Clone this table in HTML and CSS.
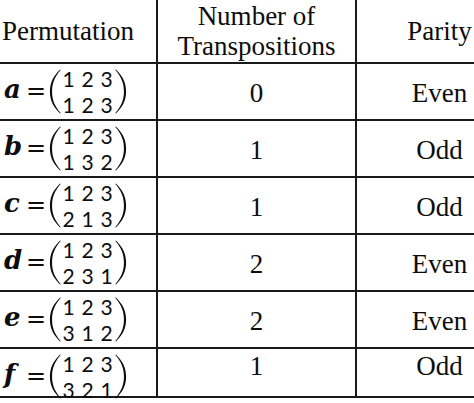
FILE: index.html
```html
<!DOCTYPE html>
<html lang="en">
<head>
<meta charset="utf-8">
<title>Permutation parity</title>
<link rel="stylesheet" href="styles.css">
</head>
<body>
<div class="frame">
  <div class="grid" role="table">
    <div class="cell head c1" role="columnheader">Permutation</div>
    <div class="cell head" role="columnheader">Number of<br>Transpositions</div>
    <div class="cell head" role="columnheader">Parity</div>

    <div class="cell math"><div class="expr"><span class="var">a</span><span class="eq">=</span><svg class="paren pl" viewBox="0 0 12 46"><path d="M11.2 0.5 C3.5 8 0.8 15 0.8 23 C0.8 31 3.5 38 11.2 45.5 L11.8 45 C5.5 38 3 31 3 23 C3 15 5.5 8 11.8 1 Z"/></svg><span class="mat"><span>1</span><span>2</span><span>3</span><span>1</span><span>2</span><span>3</span></span><svg class="paren pr" viewBox="0 0 12 46"><path d="M0.8 0.5 C8.5 8 11.2 15 11.2 23 C11.2 31 8.5 38 0.8 45.5 L0.2 45 C6.5 38 9 31 9 23 C9 15 6.5 8 0.2 1 Z"/></svg></div></div>
    <div class="cell num">0</div>
    <div class="cell num">Even</div>

    <div class="cell math"><div class="expr"><span class="var">b</span><span class="eq">=</span><svg class="paren pl" viewBox="0 0 12 46"><path d="M11.2 0.5 C3.5 8 0.8 15 0.8 23 C0.8 31 3.5 38 11.2 45.5 L11.8 45 C5.5 38 3 31 3 23 C3 15 5.5 8 11.8 1 Z"/></svg><span class="mat"><span>1</span><span>2</span><span>3</span><span>1</span><span>3</span><span>2</span></span><svg class="paren pr" viewBox="0 0 12 46"><path d="M0.8 0.5 C8.5 8 11.2 15 11.2 23 C11.2 31 8.5 38 0.8 45.5 L0.2 45 C6.5 38 9 31 9 23 C9 15 6.5 8 0.2 1 Z"/></svg></div></div>
    <div class="cell num">1</div>
    <div class="cell num">Odd</div>

    <div class="cell math"><div class="expr"><span class="var">c</span><span class="eq">=</span><svg class="paren pl" viewBox="0 0 12 46"><path d="M11.2 0.5 C3.5 8 0.8 15 0.8 23 C0.8 31 3.5 38 11.2 45.5 L11.8 45 C5.5 38 3 31 3 23 C3 15 5.5 8 11.8 1 Z"/></svg><span class="mat"><span>1</span><span>2</span><span>3</span><span>2</span><span>1</span><span>3</span></span><svg class="paren pr" viewBox="0 0 12 46"><path d="M0.8 0.5 C8.5 8 11.2 15 11.2 23 C11.2 31 8.5 38 0.8 45.5 L0.2 45 C6.5 38 9 31 9 23 C9 15 6.5 8 0.2 1 Z"/></svg></div></div>
    <div class="cell num">1</div>
    <div class="cell num">Odd</div>

    <div class="cell math"><div class="expr"><span class="var">d</span><span class="eq">=</span><svg class="paren pl" viewBox="0 0 12 46"><path d="M11.2 0.5 C3.5 8 0.8 15 0.8 23 C0.8 31 3.5 38 11.2 45.5 L11.8 45 C5.5 38 3 31 3 23 C3 15 5.5 8 11.8 1 Z"/></svg><span class="mat"><span>1</span><span>2</span><span>3</span><span>2</span><span>3</span><span>1</span></span><svg class="paren pr" viewBox="0 0 12 46"><path d="M0.8 0.5 C8.5 8 11.2 15 11.2 23 C11.2 31 8.5 38 0.8 45.5 L0.2 45 C6.5 38 9 31 9 23 C9 15 6.5 8 0.2 1 Z"/></svg></div></div>
    <div class="cell num">2</div>
    <div class="cell num">Even</div>

    <div class="cell math"><div class="expr"><span class="var">e</span><span class="eq">=</span><svg class="paren pl" viewBox="0 0 12 46"><path d="M11.2 0.5 C3.5 8 0.8 15 0.8 23 C0.8 31 3.5 38 11.2 45.5 L11.8 45 C5.5 38 3 31 3 23 C3 15 5.5 8 11.8 1 Z"/></svg><span class="mat"><span>1</span><span>2</span><span>3</span><span>3</span><span>1</span><span>2</span></span><svg class="paren pr" viewBox="0 0 12 46"><path d="M0.8 0.5 C8.5 8 11.2 15 11.2 23 C11.2 31 8.5 38 0.8 45.5 L0.2 45 C6.5 38 9 31 9 23 C9 15 6.5 8 0.2 1 Z"/></svg></div></div>
    <div class="cell num">2</div>
    <div class="cell num">Even</div>

    <div class="cell math last"><div class="expr"><span class="var">f</span><span class="eq">=</span><svg class="paren pl" viewBox="0 0 12 46"><path d="M11.2 0.5 C3.5 8 0.8 15 0.8 23 C0.8 31 3.5 38 11.2 45.5 L11.8 45 C5.5 38 3 31 3 23 C3 15 5.5 8 11.8 1 Z"/></svg><span class="mat"><span>1</span><span>2</span><span>3</span><span>3</span><span>2</span><span>1</span></span><svg class="paren pr" viewBox="0 0 12 46"><path d="M0.8 0.5 C8.5 8 11.2 15 11.2 23 C11.2 31 8.5 38 0.8 45.5 L0.2 45 C6.5 38 9 31 9 23 C9 15 6.5 8 0.2 1 Z"/></svg></div></div>
    <div class="cell num last">1</div>
    <div class="cell num last">Odd</div>
  </div>
</div>
</body>
</html>
```

FILE: styles.css
```css
html, body {
  margin: 0;
  padding: 0;
  background: #ffffff;
  overflow: hidden;
}

.frame {
  width: 474px;
  height: 403px;
  overflow: hidden;
  background: #ffffff;
}

.grid {
  display: grid;
  width: 524px;
  grid-template-columns: 158px 199px 167px;
  grid-template-rows: 64px repeat(5, 57px) 49px;
  font-family: "Liberation Serif", "Times New Roman", serif;
  font-size: 27px;
  line-height: 30px;
  color: #0d0d0d;
}

.cell {
  box-sizing: border-box;
  border-right: 2px solid #1a1a1a;
  border-bottom: 2px solid #1a1a1a;
  display: flex;
  align-items: center;
  justify-content: center;
  text-align: center;
}

.head.c1 {
  justify-content: flex-start;
  padding-left: 2px;
}

.num {
  padding-top: 3px;
}

.num.last {
  align-items: flex-start;
  padding-top: 2px;
}

.math {
  justify-content: flex-start;
  align-items: flex-start;
  padding-left: 4px;
  overflow: visible;
}

.expr {
  height: 55px;
  flex: none;
  display: flex;
  align-items: center;
}

.var {
  width: 21px;
  font-family: "DejaVu Serif", serif;
  font-weight: bold;
  font-style: italic;
  font-size: 26px;
  line-height: 30px;
  margin-bottom: 6px;
  text-align: left;
}

.eq {
  width: 22px;
  font-family: "DejaVu Sans", sans-serif;
  font-size: 24px;
  line-height: 30px;
  margin-bottom: 2px;
  text-align: center;
}

.paren {
  width: 12px;
  height: 45px;
  flex: none;
  fill: #0d0d0d;
}

.pl {
  margin-left: 2px;
}

.pr {
  margin-left: -1px;
}

.mat {
  display: grid;
  grid-template-columns: repeat(3, 19px);
  grid-auto-rows: 26px;
  margin-left: -2px;
  font-family: Lato, "Noto Sans", sans-serif;
  font-size: 21px;
  line-height: 26px;
  text-align: center;
}
```
